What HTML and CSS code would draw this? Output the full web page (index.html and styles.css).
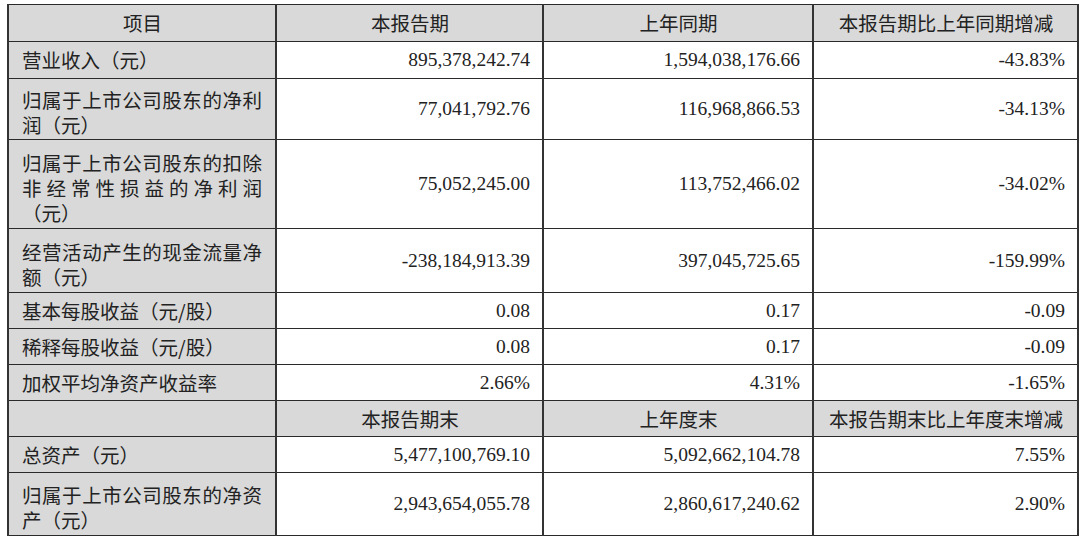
FILE: index.html
```html
<!DOCTYPE html>
<html lang="zh-CN">
<head>
<meta charset="utf-8">
<title>主要会计数据</title>
<link rel="stylesheet" href="styles.css">
</head>
<body>
<div class="wrap">
<table class="fin">
  <colgroup>
    <col class="c1"><col class="c2"><col class="c3"><col class="c4">
  </colgroup>
  <tr class="h1t head">
    <td class="lbl ctr">项目</td>
    <td class="ctr">本报告期</td>
    <td class="ctr">上年同期</td>
    <td class="ctr">本报告期比上年同期增减</td>
  </tr>
  <tr class="h1t">
    <td class="lbl">营业收入（元）</td>
    <td class="num">895,378,242.74</td>
    <td class="num">1,594,038,176.66</td>
    <td class="num">-43.83%</td>
  </tr>
  <tr class="h2">
    <td class="lbl multi"><div class="just">归属于上市公司股东的净利</div><div>润（元）</div></td>
    <td class="num">77,041,792.76</td>
    <td class="num">116,968,866.53</td>
    <td class="num">-34.13%</td>
  </tr>
  <tr class="h3">
    <td class="lbl multi"><div class="just">归属于上市公司股东的扣除</div><div class="just">非经常性损益的净利润</div><div>（元）</div></td>
    <td class="num">75,052,245.00</td>
    <td class="num">113,752,466.02</td>
    <td class="num">-34.02%</td>
  </tr>
  <tr class="h2b">
    <td class="lbl multi"><div class="just">经营活动产生的现金流量净</div><div>额（元）</div></td>
    <td class="num">-238,184,913.39</td>
    <td class="num">397,045,725.65</td>
    <td class="num">-159.99%</td>
  </tr>
  <tr class="h1">
    <td class="lbl">基本每股收益（元/股）</td>
    <td class="num">0.08</td>
    <td class="num">0.17</td>
    <td class="num">-0.09</td>
  </tr>
  <tr class="h1">
    <td class="lbl">稀释每股收益（元/股）</td>
    <td class="num">0.08</td>
    <td class="num">0.17</td>
    <td class="num">-0.09</td>
  </tr>
  <tr class="h1">
    <td class="lbl">加权平均净资产收益率</td>
    <td class="num">2.66%</td>
    <td class="num">4.31%</td>
    <td class="num">-1.65%</td>
  </tr>
  <tr class="h1 head">
    <td class="lbl"></td>
    <td class="ctr">本报告期末</td>
    <td class="ctr">上年度末</td>
    <td class="ctr">本报告期末比上年度末增减</td>
  </tr>
  <tr class="h1">
    <td class="lbl">总资产（元）</td>
    <td class="num">5,477,100,769.10</td>
    <td class="num">5,092,662,104.78</td>
    <td class="num">7.55%</td>
  </tr>
  <tr class="h2c">
    <td class="lbl multi"><div class="just">归属于上市公司股东的净资</div><div>产（元）</div></td>
    <td class="num">2,943,654,055.78</td>
    <td class="num">2,860,617,240.62</td>
    <td class="num">2.90%</td>
  </tr>
</table>
</div>
</body>
</html>
```

FILE: styles.css
```css
html, body {
  margin: 0;
  padding: 0;
  background: #ffffff;
}

.wrap {
  padding: 4px 3px 0 7px;
}

.fin {
  border-collapse: collapse;
  table-layout: fixed;
  width: 1070px;
  color: #222222;
  font-family: "Noto Sans CJK SC", "Noto Sans", sans-serif;
  font-size: 19.5px;
}

.c1 { width: 268px; }
.c2 { width: 267px; }
.c3 { width: 270px; }
.c4 { width: 265px; }

.fin td {
  border-top: 1px solid #2a2a2a;
  border-bottom: 1px solid #2a2a2a;
  border-left: 2px solid #333333;
  border-right: 2px solid #333333;
  padding: 0 12px 0 13px;
  vertical-align: middle;
  line-height: 26px;
  overflow: hidden;
  white-space: nowrap;
}

.head td {
  background: #d9d9d9;
}

.fin td.lbl {
  background: #d9d9d9;
  text-align: left;
}

.fin td.multi {
  line-height: 25px;
  padding-top: 6px;
}

.fin td.ctr {
  text-align: center;
}

.fin td.num {
  text-align: right;
  font-family: "Liberation Serif", "Times New Roman", serif;
  font-size: 19.5px;
}

.just {
  text-align: justify;
  text-align-last: justify;
  width: 240px;
}

.h1t { height: 37px; }
.h1 { height: 36px; }
.h2 { height: 61px; }
.h3 { height: 89px; }
.h2b { height: 64px; }
.h2c { height: 63px; }
```
